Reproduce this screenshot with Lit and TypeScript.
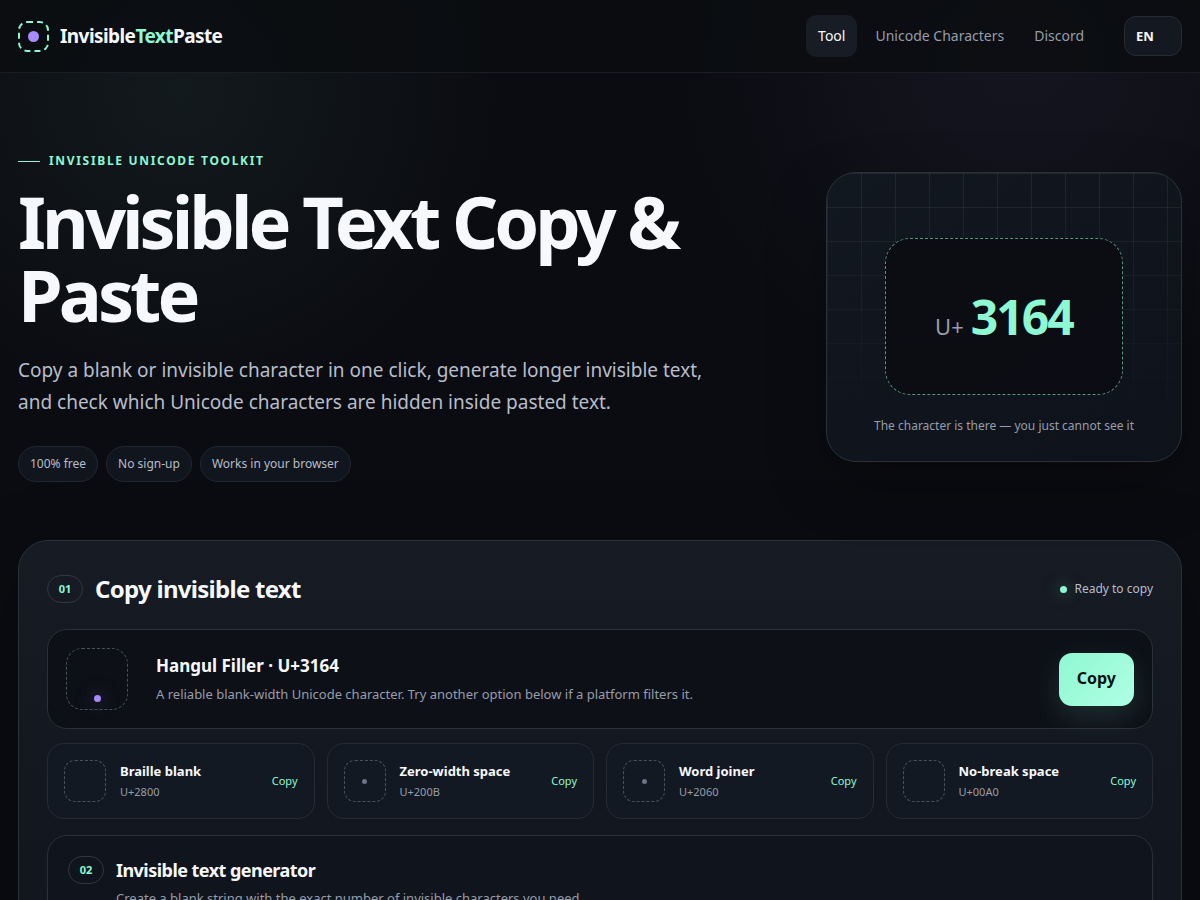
import { LitElement, html, css, nothing } from "lit";
import { customElement } from "lit/decorators.js";

interface BlankCharacter {
  name: string;
  code: string;
  value: string;
  dot: boolean;
}

const CHARACTERS: BlankCharacter[] = [
  { name: "Braille blank", code: "U+2800", value: "\u2800", dot: false },
  { name: "Zero-width space", code: "U+200B", value: "\u200b", dot: true },
  { name: "Word joiner", code: "U+2060", value: "\u2060", dot: true },
  { name: "No-break space", code: "U+00A0", value: "\u00a0", dot: false },
];

@customElement("app-root")
export class AppRoot extends LitElement {
  static styles = css`
    :host {
      --bg: #0b0c11;
      --line: #2a313b;
      --text: #f7f8fc;
      --soft: #b7bdca;
      --muted: #979daa;
      --mint: #8ef8d2;
      --violet: #a78bfa;
      display: block;
      min-height: 100vh;
      overflow-x: hidden;
      color: var(--text);
      font: 400 16px/1.6 "Noto Sans", sans-serif;
      background:
        radial-gradient(circle at 15% 90px, rgba(142, 248, 210, 0.06), transparent 320px),
        radial-gradient(circle at 85% 60px, rgba(150, 140, 235, 0.07), transparent 340px),
        var(--bg);
    }
    *, *::before, *::after { box-sizing: border-box; }
    h1, h2, h3, p, ul { margin: 0; padding: 0; }
    button, select { font: inherit; cursor: pointer; }
    a { color: inherit; text-decoration: none; }

    .bar {
      border-bottom: 1px solid #1a1d23;
      background: rgba(11, 13, 17, 0.84);
    }
    .wrap {
      max-width: 1216px;
      margin: 0 auto;
      padding: 0 18px;
    }
    .bar-row {
      display: flex;
      align-items: center;
      justify-content: space-between;
      min-height: 72px;
    }
    .brand {
      display: flex;
      align-items: center;
      gap: 11px;
      font-size: 19px;
      line-height: 26px;
      font-weight: 700;
      letter-spacing: -0.03em;
    }
    .logo {
      display: grid;
      place-items: center;
      width: 31px;
      height: 31px;
      border: 2px dashed var(--mint);
      border-radius: 9px;
    }
    .logo::before {
      content: "";
      width: 11px;
      height: 11px;
      border-radius: 50%;
      background: var(--violet);
    }
    .brand-mint { color: var(--mint); }
    .menu { display: flex; align-items: center; gap: 28px; }
    .links { display: flex; gap: 6px; }
    .link {
      padding: 10px 12px;
      border-radius: 10px;
      color: var(--muted);
      font-size: 14px;
      line-height: 22px;
    }
    .link-on { background: #171c25; color: var(--text); }
    .lang {
      appearance: none;
      width: 58px;
      height: 40px;
      padding: 0 11px;
      border: 1px solid #252c36;
      border-radius: 12px;
      background: #131821;
      color: var(--text);
      font-size: 13px;
      font-weight: 700;
    }

    .hero {
      display: grid;
      grid-template-columns: minmax(0, 1fr) 356px;
      align-items: center;
      gap: 60px;
      padding-top: 78px;
      padding-bottom: 58px;
    }
    .eyebrow {
      display: flex;
      align-items: center;
      gap: 9px;
      color: var(--mint);
      font-size: 12px;
      line-height: 20px;
      font-weight: 700;
      letter-spacing: 0.14em;
      text-transform: uppercase;
    }
    .eyebrow::before {
      content: "";
      width: 22px;
      height: 1px;
      background: var(--mint);
    }
    .title {
      margin-top: 14px;
      font-size: 72px;
      line-height: 73px;
      font-weight: 700;
      letter-spacing: -0.055em;
    }
    .lead {
      max-width: 720px;
      margin-top: 23px;
      color: var(--soft);
      font-size: 19px;
      line-height: 32px;
    }
    .tags {
      display: flex;
      flex-wrap: wrap;
      gap: 8px;
      margin-top: 28px;
      list-style: none;
    }
    .tag {
      padding: 7px 11px;
      border: 1px solid #212832;
      border-radius: 18px;
      background: #11161e;
      color: var(--soft);
      font-size: 12px;
      line-height: 20px;
    }

    .shade {
      border-radius: 30px;
      box-shadow: 0 24px 60px rgba(0, 0, 0, 0.25);
    }
    .visual {
      display: grid;
      grid-template-rows: 1fr auto;
      justify-items: center;
      position: relative;
      overflow: hidden;
      padding: 65px 24px 25px;
      border: 1px solid var(--line);
      border-radius: 30px;
      background: linear-gradient(145deg, #121820, #0e131b);
    }
    .visual::before {
      content: "";
      position: absolute;
      inset: 0;
      background:
        linear-gradient(90deg, transparent 33px, rgba(220, 235, 245, 0.08) 33px) 1px 1px / 34px 34px,
        linear-gradient(transparent 33px, rgba(220, 235, 245, 0.08) 33px) 1px 1px / 34px 34px;
      mask-image: linear-gradient(#000, transparent 90%);
    }
    .glyph {
      position: relative;
      display: flex;
      align-items: baseline;
      justify-content: center;
      gap: 7px;
      width: 238px;
      padding: 45px 0 35px;
      border: 1px dashed #5a9483;
      border-radius: 25px;
      background: rgba(10, 12, 18, 0.86);
      line-height: 66px;
    }
    .glyph-u { color: var(--muted); font-size: 22px; }
    .glyph-n {
      color: var(--mint);
      font-size: 48px;
      font-weight: 700;
      letter-spacing: -0.04em;
    }
    .caption {
      position: relative;
      margin-top: 21px;
      color: var(--muted);
      font-size: 12px;
      line-height: 20px;
    }

    .panel {
      padding: 28px;
      border: 1px solid var(--line);
      border-radius: 30px;
      background: linear-gradient(#161b24, #11151d);
      box-shadow: 0 24px 80px rgba(0, 0, 0, 0.3);
    }
    .head {
      display: flex;
      align-items: center;
      justify-content: space-between;
    }
    .head-title { display: flex; align-items: center; gap: 12px; }
    .step {
      flex: none;
      width: 36px;
      border: 1px solid #303842;
      border-radius: 14px;
      color: var(--mint);
      font-size: 11px;
      line-height: 26px;
      font-weight: 700;
      text-align: center;
    }
    .h2 {
      font-size: 24px;
      line-height: 40px;
      font-weight: 700;
      letter-spacing: -0.03em;
    }
    .status {
      display: flex;
      align-items: center;
      gap: 7px;
      color: var(--soft);
      font-size: 12px;
      line-height: 20px;
    }
    .status::before {
      content: "";
      width: 7px;
      height: 7px;
      border-radius: 50%;
      background: var(--mint);
      box-shadow: 0 0 16px rgba(142, 248, 210, 0.5);
    }

    .main-char {
      display: flex;
      align-items: center;
      gap: 28px;
      margin-top: 20px;
      padding: 18px;
      border: 1px solid var(--line);
      border-radius: 20px;
      background: #0d1017;
    }
    .blank {
      display: grid;
      flex: none;
      place-items: center;
      width: 42px;
      height: 42px;
      border: 1px dashed #49515d;
      border-radius: 11px;
    }
    .blank-big {
      place-items: end center;
      width: 62px;
      height: 62px;
      padding-bottom: 7px;
      border-radius: 16px;
    }
    .dot {
      width: 5px;
      height: 5px;
      border-radius: 50%;
      background: #6c7487;
    }
    .blank-big .dot {
      width: 7px;
      height: 7px;
      background: var(--violet);
      box-shadow: 0 0 18px rgba(167, 139, 250, 0.5);
    }
    .grow { flex: 1; min-width: 0; }
    .char-title { font-size: 17px; line-height: 26px; font-weight: 700; }
    .char-note { margin-top: 4px; color: var(--muted); font-size: 13px; line-height: 22px; }
    .copy {
      height: 53px;
      padding: 0 18px;
      border: 0;
      border-radius: 13px;
      background: linear-gradient(135deg, #8ef8d2, #b0ffe4);
      box-shadow: 0 10px 28px rgba(142, 248, 210, 0.14);
      color: #07110e;
      font-size: 16px;
      font-weight: 700;
    }

    .options {
      display: grid;
      grid-template-columns: repeat(auto-fit, minmax(240px, 1fr));
      gap: 12px;
      margin-top: 14px;
    }
    .option {
      display: flex;
      align-items: center;
      gap: 14px;
      min-height: 76px;
      padding: 10px 16px;
      border: 1px solid #252c36;
      border-radius: 17px;
      background: #131922;
      color: inherit;
      text-align: left;
    }
    .option-name {
      display: block;
      font-size: 13px;
      line-height: 20px;
      font-weight: 700;
    }
    .option-code {
      display: block;
      margin-top: 2px;
      color: var(--muted);
      font-size: 11px;
      line-height: 18px;
    }
    .option-copy { color: var(--mint); font-size: 11px; line-height: 18px; }

    .generator {
      display: flex;
      align-items: flex-start;
      gap: 12px;
      margin-top: 16px;
      padding: 20px 20px 40px;
      border: 1px solid var(--line);
      border-radius: 20px;
      background: #10141c;
    }
    .h3 {
      font-size: 18px;
      line-height: 28px;
      font-weight: 700;
      letter-spacing: -0.03em;
    }
    .note { margin-top: 3px; color: var(--muted); font-size: 13px; line-height: 22px; }

    @media (max-width: 860px) {
      .hero { grid-template-columns: minmax(0, 1fr); }
      .title { font-size: 48px; line-height: 52px; }
      .links { display: none; }
    }
  `;

  private copy(value: string) {
    navigator.clipboard?.writeText(value);
  }

  private renderOption(item: BlankCharacter) {
    return html`
      <button class="option" type="button" @click=${() => this.copy(item.value)}>
        <span class="blank">${item.dot ? html`<span class="dot"></span>` : nothing}</span>
        <span class="grow">
          <span class="option-name">${item.name}</span>
          <span class="option-code">${item.code}</span>
        </span>
        <span class="option-copy">Copy</span>
      </button>`;
  }

  render() {
    return html`
      <header class="bar">
        <div class="wrap bar-row">
          <a class="brand" href="#">
            <span class="logo" aria-hidden="true"></span>
            <span>Invisible<span class="brand-mint">Text</span>Paste</span>
          </a>
          <div class="menu">
            <nav class="links">
              <a class="link link-on" href="#tool" aria-current="page">Tool</a>
              <a class="link" href="#characters">Unicode Characters</a>
              <a class="link" href="#discord">Discord</a>
            </nav>
            <select class="lang" aria-label="Language">
              <option>EN</option>
            </select>
          </div>
        </div>
      </header>
      <main class="wrap">
        <section class="hero">
          <div>
            <p class="eyebrow">Invisible Unicode Toolkit</p>
            <h1 class="title">Invisible Text Copy &amp; Paste</h1>
            <p class="lead">
              Copy a blank or invisible character in one click, generate longer invisible text, and
              check which Unicode characters are hidden inside pasted text.
            </p>
            <ul class="tags">
              <li class="tag">100% free</li>
              <li class="tag">No sign-up</li>
              <li class="tag">Works in your browser</li>
            </ul>
          </div>
          <div class="shade">
            <div class="visual">
              <div class="glyph">
                <span class="glyph-u">U+</span><strong class="glyph-n">3164</strong>
              </div>
              <p class="caption">The character is there — you just cannot see it</p>
            </div>
          </div>
        </section>
        <section class="panel" id="tool">
          <div class="head">
            <div class="head-title">
              <span class="step">01</span>
              <h2 class="h2">Copy invisible text</h2>
            </div>
            <span class="status" role="status">Ready to copy</span>
          </div>
          <div class="main-char">
            <span class="blank blank-big"><span class="dot"></span></span>
            <div class="grow">
              <h3 class="char-title">Hangul Filler · U+3164</h3>
              <p class="char-note">
                A reliable blank-width Unicode character. Try another option below if a platform
                filters it.
              </p>
            </div>
            <button class="copy" type="button" @click=${() => this.copy("\u3164")}>Copy</button>
          </div>
          <div class="options">${CHARACTERS.map((item) => this.renderOption(item))}</div>
          <section class="generator">
            <span class="step">02</span>
            <div>
              <h2 class="h3">Invisible text generator</h2>
              <p class="note">
                Create a blank string with the exact number of invisible characters you need.
              </p>
            </div>
          </section>
        </section>
      </main>
    `;
  }
}
